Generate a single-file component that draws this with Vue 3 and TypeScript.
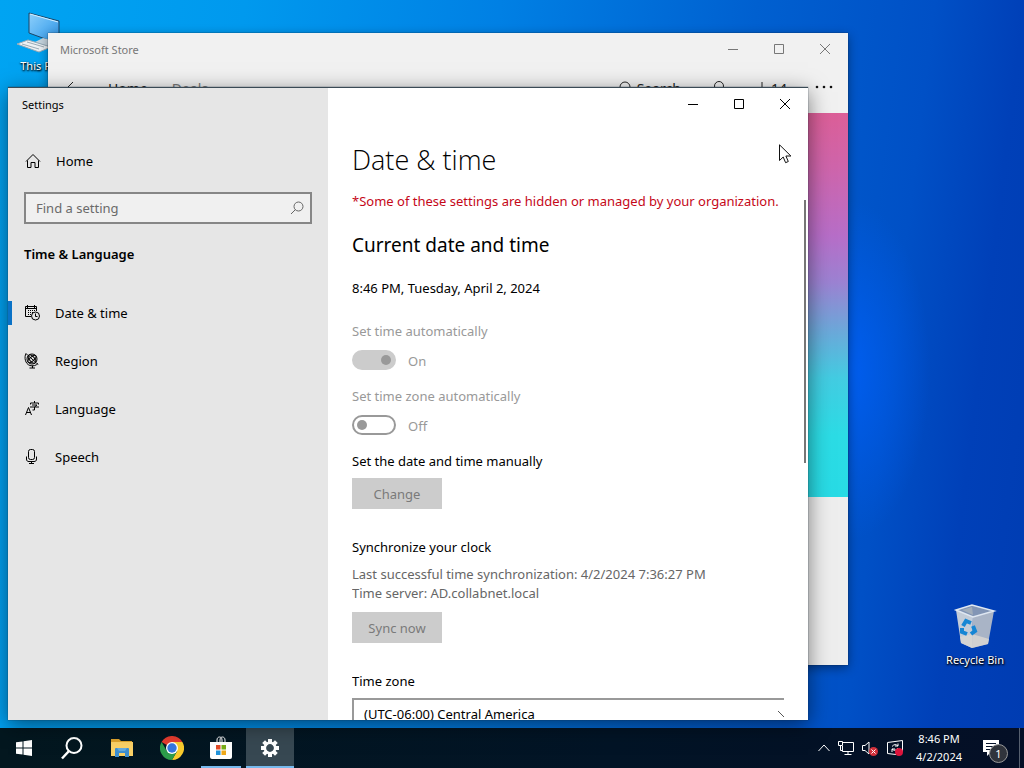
<script setup lang="ts">
import { ref } from 'vue'

interface NavItem {
  id: 'date' | 'region' | 'language' | 'speech'
  label: string
}

const navItems: NavItem[] = [
  { id: 'date', label: 'Date & time' },
  { id: 'region', label: 'Region' },
  { id: 'language', label: 'Language' },
  { id: 'speech', label: 'Speech' },
]
const current = ref<NavItem['id']>('date')
const query = ref('')
const timeZone = ref('central-america')
const autoTime = ref(true)
const autoZone = ref(false)
</script>

<template>
  <div class="screen">
    <main class="desktop">
      <button class="shortcut pc" type="button">
        <svg width="48" height="48" viewBox="0 0 48 48" aria-hidden="true">
          <defs>
            <linearGradient id="pcGlass" x1="0" y1="0" x2="1" y2="1">
              <stop offset="0" stop-color="#8fd0fb" />
              <stop offset="0.5" stop-color="#5ab2f2" />
              <stop offset="1" stop-color="#2a8de0" />
            </linearGradient>
          </defs>
          <path d="M14 4 L44 12 V35 L14 24 Z" fill="url(#pcGlass)" stroke="#1c4566" />
          <path d="M15 5 L43 13" stroke="#d4efff" />
          <path d="M20 33 L28 29 L44 33 L36 38 Z" fill="#c4d3dd" />
          <path d="M2 35 L13 31 L36 38 L24 43 Z" fill="#edf1f4" stroke="#9cabb6" />
          <path d="M7 35 L24 40 M12 33 L29 38" stroke="#9cabb6" />
        </svg>
        <span>This PC</span>
      </button>

      <button class="shortcut bin" type="button">
        <svg width="48" height="48" viewBox="0 0 48 48" aria-hidden="true">
          <path d="M5 7 L22 14 L21 45 L10 40 Z" fill="#c3ccd8" />
          <path d="M22 14 L43 8 L37 41 L21 45 Z" fill="#a9b4c6" />
          <path d="M9 34 L21 31 L38 36 L37 41 L21 45 L10 40 Z" fill="#d8d6d2" opacity="0.85" />
          <path d="M5 7 L21 2 L43 8 L22 14 Z" fill="#8295b5" stroke="#dfe7f1" stroke-width="1.5" />
          <path d="M11 7 L21 4 L22 12 Z" fill="#a2adba" />
          <g fill="none" stroke="#1686d4" stroke-width="4">
            <path d="M12 23 L15 18 L20 20" />
            <path d="M22 23 L24 28 L20 31" />
            <path d="M16 31 L11 29 L11 25" />
          </g>
        </svg>
        <span>Recycle Bin</span>
      </button>

      <section class="window store" aria-label="Microsoft Store">
        <header class="titlebar">
          <span class="window-name">Microsoft Store</span>
          <div class="controls">
            <button type="button" aria-label="Minimize Store"><svg width="10" height="10" viewBox="0 0 10 10"><path d="M0 5.5H10" /></svg></button>
            <button type="button" aria-label="Maximize Store"><svg width="10" height="10" viewBox="0 0 10 10"><path d="M.5 .5H9.5V9.5H.5Z" /></svg></button>
            <button type="button" aria-label="Close Store"><svg width="10" height="10" viewBox="0 0 10 10"><path d="M0 0L10 10M10 0L0 10" /></svg></button>
          </div>
        </header>
        <nav class="store-nav">
          <button class="back" type="button" aria-label="Back">
            <svg width="16" height="16" viewBox="0 0 16 16"><path d="M9 1L2 8L9 15M2 8H16" /></svg>
          </button>
          <a class="home-tab" href="#home">Home</a>
          <a class="deals" href="#deals">Deals</a>
          <button class="find" type="button">
            <svg width="16" height="16" viewBox="0 0 16 16"><circle cx="8" cy="6" r="5" /><path d="M4 10L0 15" /></svg>
            <span>Search</span>
          </button>
          <button class="user" type="button" aria-label="Account">
            <svg width="16" height="18" viewBox="0 0 16 18"><circle cx="8" cy="6" r="4.5" /><path d="M1 18C1 9 15 9 15 18" /></svg>
          </button>
          <button class="downloads" type="button">
            <svg width="10" height="16" viewBox="0 0 10 16"><path d="M5 1V13M1 9L5 13L9 9M0 15.500H10" /></svg>
            <span>14</span>
          </button>
          <button class="more" type="button" aria-label="More">
            <svg width="18" height="4" viewBox="0 0 18 4"><circle cx="2" cy="2" r="1.300" /><circle cx="9" cy="2" r="1.300" /><circle cx="16" cy="2" r="1.300" /></svg>
          </button>
        </nav>
        <div class="hero"></div>
      </section>

      <section class="window settings" aria-label="Settings">
        <aside class="sidebar">
          <div class="sidebar-title">Settings</div>
          <a class="nav-row home" href="#settings-home">
            <svg class="line-icon" width="16" height="16" viewBox="0 0 16 16" aria-hidden="true">
              <path d="M1 8.500L8 1.500L15 8.500M2.500 7.500V14.500H6V9.500H10V14.500H13.500V7.500" />
            </svg>
            <span>Home</span>
          </a>
          <div class="search">
            <input v-model="query" type="text" placeholder="Find a setting" aria-label="Find a setting" />
            <svg class="line-icon" width="14" height="14" viewBox="0 0 14 14" aria-hidden="true">
              <circle cx="8.500" cy="5.500" r="4.500" /><path d="M5.500 8.500L1 13" />
            </svg>
          </div>
          <h2>Time &amp; Language</h2>
          <nav class="sections">
            <a
              v-for="item in navItems"
              :key="item.id"
              class="nav-row"
              :class="{ current: item.id === current }"
              :href="'#' + item.id"
              @click.prevent="current = item.id"
            >
              <svg v-if="item.id === 'date'" class="line-icon" width="16" height="16" viewBox="0 0 16 16" aria-hidden="true">
                <path d="M7 11.500H1.500V1.500H12.500V6M1.500 3.500H12.500M3.500 0V3M10.500 0V3" />
                <path stroke-dasharray="1 1" d="M4 5.500H11M4 7.500H9M4 9.500H7" />
                <circle cx="11.500" cy="11" r="4" /><path d="M11.500 8.500V11.500H13.500" />
              </svg>
              <svg v-else-if="item.id === 'region'" class="line-icon" width="16" height="16" viewBox="0 0 16 16" aria-hidden="true">
                <circle cx="8" cy="6" r="5" />
                <ellipse cx="8" cy="6" rx="2.500" ry="5" transform="rotate(-40 8 6)" />
                <ellipse cx="8" cy="6" rx="5" ry="2" transform="rotate(-40 8 6)" />
                <path d="M4 2.500L12 9.500M2 .5C0 4 1 11 6 12.500C9 13.500 12 12.500 14 10.500M2 .5L4 2.500M12 9.500L14 11.500M8.500 12.500V15M5.500 15H11" />
              </svg>
              <svg v-else-if="item.id === 'language'" class="line-icon" width="16" height="16" viewBox="0 0 16 16" aria-hidden="true">
                <path d="M1.500 14L4.500 6.500L7.500 14M2.500 11.500H6.500M6.500 3.500V2H14.500V3.500M10.500 0V2M8 4H13L10.500 6V9H8.500M6 6H15" />
              </svg>
              <svg v-else class="line-icon" width="16" height="16" viewBox="0 0 16 16" aria-hidden="true">
                <rect x="4.500" y=".5" width="6" height="10" rx="2" />
                <path d="M2.500 7.500V10C2.500 12 3.500 12.500 5 12.500H10C11.500 12.500 12.500 12 12.500 10V7.500M7.500 12.500V14.500M5 14.500H10" />
              </svg>
              <span>{{ item.label }}</span>
            </a>
          </nav>
        </aside>

        <div class="page">
          <header class="titlebar">
            <div class="controls">
              <button type="button" aria-label="Minimize"><svg width="10" height="10" viewBox="0 0 10 10"><path d="M0 5.500H10" /></svg></button>
              <button type="button" aria-label="Maximize"><svg width="10" height="10" viewBox="0 0 10 10"><path d="M.5 .5H9.500V9.500H.5Z" /></svg></button>
              <button type="button" aria-label="Close"><svg width="10" height="10" viewBox="0 0 10 10"><path d="M0 0L10 10M10 0L0 10" /></svg></button>
            </div>
          </header>
          <div class="content">
            <h1>Date &amp; time</h1>
            <p class="notice">*Some of these settings are hidden or managed by your organization.</p>
            <h3>Current date and time</h3>
            <p class="now">8:46 PM, Tuesday, April 2, 2024</p>

            <div class="field off">
              <label for="auto-time">Set time automatically</label>
              <div class="toggle"><input id="auto-time" v-model="autoTime" type="checkbox" role="switch" disabled /><span>{{ autoTime ? 'On' : 'Off' }}</span></div>
            </div>
            <div class="field off">
              <label for="auto-zone">Set time zone automatically</label>
              <div class="toggle"><input id="auto-zone" v-model="autoZone" type="checkbox" role="switch" disabled /><span>{{ autoZone ? 'On' : 'Off' }}</span></div>
            </div>

            <p class="label">Set the date and time manually</p>
            <button class="action" type="button" disabled>Change</button>

            <p class="label sync">Synchronize your clock</p>
            <p class="detail">Last successful time synchronization: 4/2/2024 7:36:27 PM<br />Time server: AD.collabnet.local</p>
            <button class="action" type="button" disabled>Sync now</button>

            <label class="label zone" for="time-zone">Time zone</label>
            <div class="zone-box">
              <select id="time-zone" v-model="timeZone">
                <option value="central-america">(UTC-06:00) Central America</option>
              </select>
              <svg class="line-icon" width="14" height="8" viewBox="0 0 14 8" aria-hidden="true"><path d="M1 1L7 7L13 1" /></svg>
            </div>
          </div>
          <div class="scroll-thumb"></div>
        </div>
      </section>

      <svg class="pointer" width="13" height="20" viewBox="0 0 13 20" aria-hidden="true">
        <path d="M.5 .8V16.500L4.200 13L6.600 18.700L9.300 17.500L6.900 12H11.900Z" fill="#fff" stroke="#111" />
      </svg>
    </main>

    <footer class="taskbar">
      <div class="apps">
        <button type="button" aria-label="Start">
          <svg width="16" height="16" viewBox="0 0 16 16"><path fill="#fff" d="M0 2.300L6.500 1.400V7.500H0ZM7.500 1.200L16 0V7.500H7.500ZM0 8.500H6.500V14.600L0 13.700ZM7.500 8.500H16V16L7.500 14.800Z" /></svg>
        </button>
        <button type="button" aria-label="Search">
          <svg width="24" height="24" viewBox="0 0 24 24"><circle cx="14" cy="9.500" r="7.500" fill="none" stroke="#fff" stroke-width="2" /><path d="M9 15L2 22.500" stroke="#fff" stroke-width="2.500" /></svg>
        </button>
        <button class="pinned" type="button" aria-label="File Explorer">
          <svg width="22" height="20" viewBox="0 0 22 20"><path fill="#dfa32c" d="M0 1H8L10 3H21V7H0Z" /><path fill="#fbd166" d="M0 4H22V18H0Z" /><path fill="#3f8fd0" d="M4 11Q4 10 5 10H17Q18 10 18 11V19H14V15H8V19H4Z" /><path fill="#64aade" d="M6 10H16L14 13H8Z" /></svg>
        </button>
        <button class="pinned" type="button" aria-label="Chrome">
          <svg width="24" height="24" viewBox="0 0 24 24"><path fill="#e53c2f" d="M12 12L1.600 6A12 12 0 0 1 22.400 6Z" /><path fill="#facb2d" d="M12 12V6H22.400A12 12 0 0 1 12 24L17.200 15Z" /><path fill="#2d9c4a" d="M12 12L17.200 15L12 24A12 12 0 0 1 1.600 6L6.800 15Z" /><circle cx="12" cy="12" r="6" fill="#fff" /><circle cx="12" cy="12" r="4.700" fill="#3576df" /></svg>
        </button>
        <button class="open" type="button" aria-label="Microsoft Store">
          <svg width="24" height="24" viewBox="0 0 24 24"><path d="M8 7V4C8 0 13 0 13 4V7M11 7V4C11 0 16 0 16 4V7" fill="none" stroke="#fff" /><path fill="#fff" d="M1 6H23V21Q23 23 21 23H3Q1 23 1 21Z" /><path fill="#e24a25" d="M7 9H11.500V13.500H7Z" /><path fill="#78ad17" d="M12.500 9H17V13.500H12.500Z" /><path fill="#2294db" d="M7 14.500H11.500V19H7Z" /><path fill="#efa91b" d="M12.500 14.500H17V19H12.500Z" /></svg>
        </button>
        <button class="open active" type="button" aria-label="Settings">
          <svg width="20" height="20" viewBox="-10 -10 20 20">
            <g fill="#fff"><rect v-for="n in 8" :key="n" x="-2" y="-9" width="4" height="5" :transform="`rotate(${n * 45})`" /></g>
            <circle r="5.200" fill="none" stroke="#fff" stroke-width="2.600" />
          </svg>
        </button>
      </div>
      <div class="tray">
        <button type="button" aria-label="Show hidden icons"><svg width="14" height="20" viewBox="0 0 14 20"><path d="M1.500 13L7 7L12.500 13" /></svg></button>
        <button type="button" aria-label="Network"><svg width="16" height="20" viewBox="0 0 16 20"><path d="M5 4.500H15.500V13.500H4.500V8M10 13.500V16.500M6.500 16.500H13.500M.5 3.500H4.500V7.500H.5ZM2.500 7.500V12.500H4" /></svg></button>
        <button type="button" aria-label="Volume muted"><svg width="18" height="20" viewBox="0 0 18 20"><path d="M1.500 7.500H4L8 4V16L4 12.500H1.500Z" /><circle cx="12.500" cy="13.500" r="4.500" fill="#d12f3a" stroke="none" /><path d="M10.500 11.500L14.500 15.500M14.500 11.500L10.500 15.500" /></svg></button>
        <button type="button" aria-label="Update status"><svg width="18" height="20" viewBox="0 0 18 20"><path d="M1.500 4.500L16.500 2.500V14M1.500 4.500V15.500L10 16.500M6 8.500Q9 5 12 8V5.500M12 8H9M12 10Q9 14 6 11V14M6 11H9" /><circle cx="13" cy="14" r="4" fill="#dc143c" stroke="none" /></svg></button>
        <time class="clock" datetime="2024-04-02T20:46">8:46 PM<br />4/2/2024</time>
        <button class="notifications" type="button" aria-label="1 notification">
          <svg width="18" height="18" viewBox="0 0 18 18"><path d="M1 1H17V13H9L5 17V13H1Z" fill="#fff" stroke="none" /><path d="M4 4.500H14M4 7.500H14M4 10.500H10" stroke="#06132a" /></svg>
          <span class="count">1</span>
        </button>
        <button class="peek" type="button" aria-label="Show desktop"></button>
      </div>
    </footer>
  </div>
</template>

<style>
body {
  margin: 0;
  overflow: hidden;
}
</style>

<style scoped>
* {
  box-sizing: border-box;
}
.screen {
  display: grid;
  grid-template-rows: 1fr 40px;
  height: 100vh;
  overflow: hidden;
  font: 13px/20px "Noto Sans", "Open Sans", sans-serif;
  color: #000;
}
button {
  padding: 0;
  border: 0;
  background: none;
  font: inherit;
  color: inherit;
}
a {
  color: inherit;
  text-decoration: none;
}
h1,
h2,
h3,
p {
  margin: 0;
  font-weight: 400;
}
.line-icon {
  fill: none;
  stroke: currentColor;
}

/* Desktop */
.desktop {
  position: relative;
  background:
    radial-gradient(ellipse 80px 170px at 850px 370px, rgba(0, 98, 255, 0.7), transparent),
    linear-gradient(97deg, #00a4f2 0%, #0099ee 22%, #0080e4 45%, #0060d0 68%, #0050c6 84%, #0040b8 92%, #003cb2 100%);
}
.shortcut {
  position: absolute;
  display: flex;
  flex-direction: column;
  align-items: center;
  width: 76px;
  font-size: 11px;
  line-height: 16px;
  color: #fff;
  text-shadow: 1px 1px 2px #000, 0 1px 2px #000;
}
.shortcut span {
  margin-top: 1px;
}
.pc {
  top: 9px;
  left: 1px;
}
.bin {
  right: 11px;
  bottom: 60px;
}
.window {
  position: absolute;
  overflow: hidden;
}
.titlebar {
  display: flex;
  flex: none;
  justify-content: space-between;
  height: 32px;
}
.controls {
  display: flex;
  margin-left: auto;
}
.controls button {
  display: grid;
  place-items: center;
  width: 46px;
}
.controls svg {
  fill: none;
  stroke: currentColor;
}

/* Store window */
.store {
  inset: 33px 176px 63px 48px;
  display: flex;
  flex-direction: column;
  background: #eee;
  box-shadow: 0 0 1px #123, 0 3px 10px rgba(0, 0, 0, 0.4);
}
.store .titlebar {
  background: #f1f1f1;
  color: #777;
}
.window-name {
  padding-left: 12px;
  font-size: 11px;
  line-height: 33px;
}
.store-nav {
  display: flex;
  flex: none;
  align-items: center;
  height: 48px;
  padding: 0 15px 0 16px;
  background: #f1f1f1;
  font-size: 14px;
  color: #222;
}
.store-nav svg {
  fill: none;
  stroke: currentColor;
}
.store-nav button {
  display: flex;
  align-items: center;
  gap: 4px;
}
.home-tab {
  margin-left: 28px;
}
.deals {
  margin-left: 24px;
  color: #777;
}
.store-nav .find {
  margin-left: auto;
}
.user {
  margin-left: 30px;
}
.downloads {
  margin-left: 30px;
}
.more {
  margin-left: 28px;
  padding-bottom: 5px;
}
.more circle {
  fill: #111;
  stroke: none;
}
.hero {
  flex: 0 0 384px;
  background: linear-gradient(#dc5f98 0%, #cf65ab 14%, #b76ec8 32%, #9c82d2 44%, #6ba9da 57%, #43cce2 69%, #2cdce5 84%, #28dbe5 100%);
}

/* Settings window */
.settings {
  inset: 87px 216px 8px 8px;
  display: flex;
  border: solid #3a4a55;
  border-width: 1px 0 0;
  background: #fff;
  box-shadow: 0 0 1px rgba(20, 40, 60, 0.9), 0 5px 20px rgba(0, 0, 0, 0.5);
}
.sidebar {
  flex: 0 0 320px;
  background: #e6e6e6;
}
.sidebar-title {
  height: 32px;
  padding-left: 14px;
  font-size: 11px;
  line-height: 34px;
}
.nav-row {
  display: flex;
  align-items: center;
  gap: 15px;
  height: 48px;
  padding-left: 16px;
}
.home {
  margin-top: 17px;
  padding-left: 17px;
}
.search {
  display: flex;
  align-items: center;
  height: 32px;
  margin: 7px 16px 0;
  padding-right: 6px;
  border: 2px solid #868686;
  background: #f0f0f0;
  color: #666;
}
.search input {
  flex: 1;
  min-width: 0;
  padding: 0 10px;
  border: 0;
  outline: 0;
  background: none;
  font: inherit;
}
.search input::placeholder {
  color: #6a6a6a;
  opacity: 1;
}
.sidebar h2 {
  margin: 20px 16px 25px;
  font-size: 13px;
  font-weight: 600;
  line-height: 20px;
}
.current {
  background: linear-gradient(#0a72c6, #0a72c6) 0 50% / 4px 24px no-repeat;
}
.page {
  position: relative;
  display: flex;
  flex: 1;
  flex-direction: column;
  min-width: 0;
}
.content {
  flex: 1;
  min-height: 0;
  margin: 0 24px;
  padding-top: 20px;
  overflow: hidden;
}
h1 {
  font-family: "Open Sans", "Noto Sans", sans-serif;
  font-size: 27px;
  font-weight: 300;
  line-height: 40px;
}
.notice {
  margin-top: 11px;
  color: #c50818;
  white-space: nowrap;
}
h3 {
  margin-top: 20px;
  font-size: 19px;
  line-height: 28px;
}
.now {
  margin-top: 19px;
}
.field {
  margin-top: 23px;
}
.field + .field {
  margin-top: 16px;
}
.off {
  color: #999;
}
.field label,
.zone {
  display: block;
}
.toggle {
  display: flex;
  gap: 12px;
  height: 20px;
  margin-top: 9px;
  line-height: 22px;
}
.toggle input {
  display: flex;
  align-items: center;
  width: 44px;
  height: 20px;
  margin: 0;
  padding: 0 3px;
  appearance: none;
  border: 2px solid #999;
  border-radius: 10px;
  background: #fff;
}
.toggle input::before {
  content: "";
  width: 10px;
  height: 10px;
  border-radius: 50%;
  background: #999;
}
.toggle input:checked {
  justify-content: flex-end;
  border-color: #ccc;
  background: #ccc;
}
.label {
  margin-top: 16px;
}
.action {
  display: block;
  width: 90px;
  height: 31px;
  margin-top: 7px;
  background: #ccc;
  color: #7a7a7a;
}
.sync {
  margin-top: 28px;
}
.detail {
  margin-top: 8px;
  line-height: 19px;
  color: #666;
}
.detail + .action {
  margin-top: 9px;
}
.zone {
  margin-top: 28px;
}
.zone-box {
  display: grid;
  align-items: center;
  width: calc(100% + 20px);
  margin-top: 7px;
}
.zone-box > * {
  grid-area: 1 / 1;
}
.zone-box select {
  width: 100%;
  height: 32px;
  padding: 0 10px;
  appearance: none;
  border: 2px solid #999;
  border-radius: 0;
  background: #fff;
  font: inherit;
  color: inherit;
}
.zone-box svg {
  justify-self: end;
  margin-right: 13px;
  color: #555;
}
.scroll-thumb {
  position: absolute;
  top: 112px;
  right: 2px;
  width: 2px;
  height: 263px;
  background: #767676;
}
.pointer {
  position: absolute;
  top: 144px;
  right: 232px;
}

/* Taskbar */
.taskbar {
  display: flex;
  justify-content: space-between;
  background: linear-gradient(90deg, #03171f, #021426 60%, #040f26);
  color: #fff;
}
.apps {
  display: flex;
}
.apps button {
  display: grid;
  place-items: center;
  width: 48px;
}
.apps .pinned {
  margin-left: 2px;
}
.apps .open {
  margin-left: 1px;
  background: linear-gradient(#76b9ed, #76b9ed) 50% 100% / 40px 2px no-repeat;
}
.apps .active {
  background: linear-gradient(#76b9ed, #76b9ed) 0 100% / 100% 2px no-repeat #374852;
}
.tray {
  display: flex;
  align-items: center;
}
.tray svg {
  display: block;
  fill: none;
  stroke: #fff;
}
.tray > button {
  margin-right: 7px;
}
.clock {
  margin: 0 20px 0 5px;
  font-size: 11px;
  line-height: 18px;
  text-align: center;
}
.tray .notifications {
  position: relative;
  margin-right: 19px;
}
.count {
  position: absolute;
  top: 5px;
  left: 7px;
  width: 19px;
  height: 19px;
  border: 1px solid #999;
  border-radius: 50%;
  background: #30343c;
  font-size: 11px;
  line-height: 17px;
}
.tray .peek {
  width: 5px;
  height: 40px;
  margin: 0;
  border-left: 1px solid #56606f;
}
</style>
